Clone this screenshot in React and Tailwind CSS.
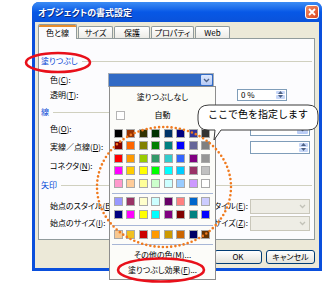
import React from 'react';

const jp = "font-['Noto_Sans_CJK_JP','Noto_Sans',sans-serif] [font-feature-settings:'palt']";

const palette = [
  ['#000000', '#993300', '#333300', '#003300', '#003366', '#000080', '#333399', '#333333'],
  ['#800000', '#FF6600', '#808000', '#008000', '#008080', '#0000FF', '#666699', '#808080'],
  ['#FF0000', '#FF9900', '#99CC00', '#339966', '#33CCCC', '#3366FF', '#800080', '#969696'],
  ['#FF00FF', '#FFCC00', '#FFFF00', '#00FF00', '#00FFFF', '#00CCFF', '#993366', '#C0C0C0'],
  ['#FF99CC', '#FFCC99', '#FFFF99', '#CCFFCC', '#CCFFFF', '#99CCFF', '#CC99FF', '#FFFFFF'],
];
const chartColors = [
  ['#9999FF', '#993366', '#FFFFCC', '#CCFFFF', '#660066', '#FF8080', '#0066CC', '#CCCCFF'],
  ['#000080', '#FF00FF', '#FFFF00', '#00FFFF', '#800080', '#800000', '#008080', '#0000FF'],
];
const recent = [['#F8C890', '#F0C020', '#CC0000', '#FF9900', '#CC9900', '#CC6600', '#000066', '#663300']];

const Swatches = ({ rows }) => (
  <div className="grid grid-cols-[repeat(8,12.5px)] auto-rows-[12.5px] pl-[2px]">
    {rows.flat().map((c, i) => (
      <div key={i} className="flex items-center justify-center">
        <div className="w-[9px] h-[9px] border border-[#A9A9A9]" style={{ background: c }} />
      </div>
    ))}
  </div>
);

const Sep = ({ className }) => <div className={`h-px mx-[2px] bg-[#A7B6D6] ${className}`} />;

const U = ({ children }) => <span className="underline underline-offset-1">{children}</span>;

const Chevron = ({ color = '#4D6185' }) => (
  <svg width="7" height="5" viewBox="0 0 7 5">
    <path d="M1 1 L3.5 3.5 L6 1" fill="none" stroke={color} strokeWidth="1.3" />
  </svg>
);

const Spin = () => (
  <div className="w-[9px] h-full flex flex-col gap-px py-px">
    <div className="flex-1 bg-[#C6D6F7] rounded-[1px] flex items-center justify-center">
      <svg width="5" height="3" viewBox="0 0 5 3"><path d="M0 3 L2.5 0 L5 3Z" fill="#4D6185" /></svg>
    </div>
    <div className="flex-1 bg-[#C6D6F7] rounded-[1px] flex items-center justify-center">
      <svg width="5" height="3" viewBox="0 0 5 3"><path d="M0 0 L2.5 3 L5 0Z" fill="#4D6185" /></svg>
    </div>
  </div>
);

const Header = ({ label, className }) => (
  <div className={`h-[12px] flex items-center gap-[4px] pl-[2px] pr-[2px] ${className}`}>
    <span className="text-[#0046D5]">{label}</span>
    <div className="flex-1 h-px bg-[#D0D0BF]" />
  </div>
);

const Tab = ({ label, w, active }) =>
  active ? (
    <div className={`${w} h-[15px] -mb-px z-10 relative bg-[#FCFCFE] border border-b-0 border-[#919B9C] rounded-t-[2px] flex items-center justify-center overflow-hidden`}>
      <div className="absolute top-0 left-0 right-0 h-[2px] bg-[#E68B2C]" />
      <span className="mt-[2px]">{label}</span>
    </div>
  ) : (
    <div className={`${w} h-[12px] bg-gradient-to-b from-white to-[#ECEBE6] border border-b-0 border-[#919B9C] rounded-t-[2px] flex items-center justify-center`}>
      <span>{label}</span>
    </div>
  );

export default function App() {
  return (
    <div className={`relative w-[324px] h-[284px] bg-white overflow-hidden text-[8px] leading-none text-black ${jp}`}>
      {/* window */}
      <div className="ml-[32px] mt-[2px] w-[290px] h-[269px] bg-[#0A4FDC] rounded-t-[7px] flex flex-col px-[3px] pb-[3px]">
        <div className="h-[20px] -mx-[3px] rounded-t-[7px] bg-gradient-to-b from-[#3C8CF4] via-[#0758E6] to-[#0A52DA] flex items-center pl-[6px] pr-[3px]">
          <span className="text-white font-bold text-[9px] [text-shadow:1px_1px_0_#0A2A80]">オブジェクトの書式設定</span>
          <div className="ml-auto w-[14px] h-[14px] rounded-[3px] border border-white bg-gradient-to-br from-[#F08A62] to-[#D9441C] flex items-center justify-center">
            <svg width="8" height="8" viewBox="0 0 8 8">
              <path d="M1 1 L7 7 M7 1 L1 7" stroke="white" strokeWidth="1.8" />
            </svg>
          </div>
        </div>
        <div className="flex-1 bg-[#ECE9D8] flex flex-col pl-[3px] pr-[4px] pt-[2px]">
          <div className="flex items-end h-[14px] gap-px">
            <Tab label="色と線" w="w-[39px]" active />
            <Tab label="サイズ" w="w-[35px]" />
            <Tab label="保護" w="w-[36px]" />
            <Tab label="プロパティ" w="w-[43px]" />
            <Tab label="Web" w="w-[35px]" />
          </div>
          <div className="h-[202px] border border-[#919B9C] bg-[#FCFCFE] flex flex-col pt-[16px]">
            <Header label="塗りつぶし" />
            <div className="h-[14px] mt-[6px] flex items-center pl-[11px]">
              <span className="w-[58px]">色(<U>C</U>):</span>
              <div className="w-[106px] h-[14px] border border-[#A5ACB5] bg-[#316AC5] flex justify-end p-px">
                <div className="w-[11px] h-full bg-gradient-to-b from-[#DCE7FD] to-[#B5C9F5] rounded-[1px] flex items-center justify-center">
                  <Chevron />
                </div>
              </div>
            </div>
            <div className="h-[15px] flex items-center pl-[11px]">
              <span className="w-[58px]">透明(<U>T</U>):</span>
              <div className="ml-[129px] w-[50px] h-[12px] border border-[#7F9DB9] bg-white flex items-center pl-[3px] pr-px">
                <span className="flex-1">0 %</span>
                <Spin />
              </div>
            </div>
            <Header label="線" className="mt-[4px]" />
            <div className="h-[14px] mt-[4px] flex items-center pl-[11px] pr-[4px]">
              <span>色(<U>O</U>):</span>
              <div className="ml-auto w-[60px] h-[14px] border border-[#7F9DB9] bg-white flex justify-end p-px">
                <div className="w-[11px] h-full bg-gradient-to-b from-[#DCE7FD] to-[#B5C9F5] rounded-[1px] flex items-center justify-center">
                  <Chevron />
                </div>
              </div>
            </div>
            <div className="h-[14px] mt-[4px] flex items-center pl-[11px] pr-[4px]">
              <span>実線／点線(<U>D</U>):</span>
              <div className="ml-auto w-[60px] h-[13px] border border-[#7F9DB9] bg-white flex justify-end pr-px">
                <Spin />
              </div>
            </div>
            <div className="h-[14px] mt-[5px] flex items-center pl-[11px]">
              <span>コネクタ(<U>N</U>):</span>
            </div>
            <Header label="矢印" className="mt-[6px]" />
            <div className="h-[16px] mt-[7px] flex items-center pl-[11px] pr-[4px]">
              <span>始点のスタイル(<U>B</U>):</span>
              <span className="ml-auto mr-[2px]">終点のスタイル(<U>E</U>):</span>
              <div className="w-[60px] h-[15px] border border-[#C9C7BA] bg-[#EEEDE5] flex justify-end items-center pr-[3px]">
                <Chevron color="#C2C2B8" />
              </div>
            </div>
            <div className="h-[16px] mt-[1px] flex items-center pl-[11px] pr-[4px]">
              <span>始点のサイズ(<U>I</U>):</span>
              <span className="ml-auto mr-[2px]">終点のサイズ(<U>Z</U>):</span>
              <div className="w-[60px] h-[15px] border border-[#C9C7BA] bg-[#EEEDE5] flex justify-end items-center pr-[3px]">
                <Chevron color="#C2C2B8" />
              </div>
            </div>
          </div>
          <div className="mt-[10px] flex justify-end gap-[4px] pr-[-1px]">
            <button className="w-[48px] h-[14px] rounded-[3px] border border-[#003C74] bg-gradient-to-b from-white to-[#E3E3DB] flex items-center justify-center">OK</button>
            <button className="w-[49px] h-[14px] rounded-[3px] border border-[#003C74] bg-gradient-to-b from-white to-[#E3E3DB] flex items-center justify-center">キャンセル</button>
          </div>
        </div>
      </div>

      {/* color popup */}
      <div className="absolute left-[109px] top-[86px] w-[107px] h-[194px] bg-[#FCFCF9] border border-[#8D8D8D] flex flex-col">
        <div className="h-[20px] flex items-center justify-center">塗りつぶしなし</div>
        <div className="h-[16px] flex items-center relative">
          <div className="ml-[6px] w-[9px] h-[9px] border border-[#B5B5B5] bg-white" />
          <span className="absolute left-0 right-0 text-center">自動</span>
        </div>
        <div className="mt-[4px]"><Swatches rows={palette} /></div>
        <Sep className="mt-[3px]" />
        <div className="mt-[2px]"><Swatches rows={chartColors} /></div>
        <Sep className="mt-[4px]" />
        <div className="mt-[3px]"><Swatches rows={recent} /></div>
        <Sep className="mt-[3px]" />
        <div className="h-[16px] mt-[2px] flex items-center justify-center">その他の色(<U>M</U>)...</div>
        <div className="h-[14px] flex items-center justify-center">塗りつぶし効果(<U>F</U>)...</div>
      </div>

      {/* callout bubble */}
      <svg className="absolute left-0 top-0 pointer-events-none" width="324" height="284">
        <path
          d="M209 105 H308 Q318 105 318 115 V120 Q318 130 308 130 H221 L214 140 L215 130 H208 Q198 130 198 120 V115 Q198 105 209 105 Z"
          fill="white"
          stroke="#3A3A3A"
          strokeWidth="1"
        />
      </svg>
      <div className="absolute left-[208px] top-[108px] text-[10px] leading-[12px] [font-feature-settings:normal] font-['Noto_Sans_CJK_JP',sans-serif]">ここで色を指定します</div>

      {/* annotation ellipses */}
      <svg className="absolute left-0 top-0 pointer-events-none" width="324" height="284">
        <ellipse cx="164" cy="187" rx="67" ry="60" fill="none" stroke="#F07A1E" strokeWidth="2.6" strokeDasharray="0 4.2" strokeLinecap="round" />
        <ellipse cx="58" cy="62.5" rx="32" ry="9.5" fill="none" stroke="#E8101A" strokeWidth="2.6" />
        <ellipse cx="161" cy="270" rx="43" ry="11.5" fill="none" stroke="#E8101A" strokeWidth="2.6" />
      </svg>
    </div>
  );
}
